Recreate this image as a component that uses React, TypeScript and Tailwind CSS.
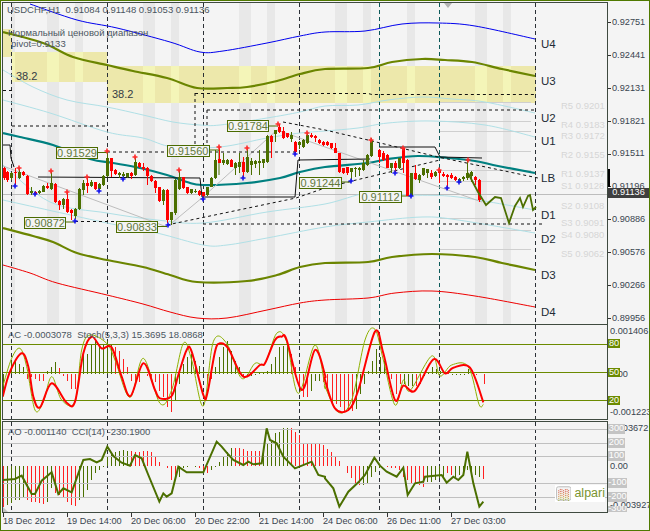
type P = [number, number]

// all chart data below is in crop coordinates (3x), z() brings it back to page pixels
const z = (ox: number, oy: number, list: P[]) => list.map(([x, y]) => `${ox + x / 3},${oy + y / 3}`).join(' ')

// catmull-rom through the points, MT4 lines are smooth between the samples
const smooth = (pts: string) => {
  const p = pts.split(' ').map((s) => s.split(',').map(Number))
  let d = `M${p[0][0]} ${p[0][1]}`
  for (let i = 0; i < p.length - 1; i++) {
    const a = p[i - 1] || p[i]
    const b = p[i]
    const c = p[i + 1]
    const e = p[i + 2] || c
    d += `C${b[0] + (c[0] - a[0]) / 6} ${b[1] + (c[1] - a[1]) / 6} ${c[0] - (e[0] - b[0]) / 6} ${c[1] - (e[1] - b[1]) / 6} ${c[0]} ${c[1]}`
  }
  return d
}

const bands: P[] = [[11, 15], [47, 59], [75, 83], [143, 155], [171, 179], [239, 251], [267, 275], [335, 347], [363, 371], [407, 415], [475, 487], [503, 511]]
const yellow = [{ x: 3, y: 29, w: 9, h: 28 }, { x: 12, y: 52, w: 95, h: 30 }, { x: 107, y: 66, w: 429, h: 37 }]
const gridX = [11.5, 107.5, 203.5, 299.5, 379.5, 439.5, 535.5]

const lines: { pts: string; color: string; w: number }[] = [
  { color: '#0000ee', w: 1, pts: '30,4 77,20 117,28 170,42 200,52 223,51 267,43 300,36 325,32 365,31 402,24 438,23 475,26 535,39' },
  { color: '#6b8500', w: 2.2, pts: '3,32 43,43 73,57 107,65 133,71 167,78 197,88 227,88 247,87 277,81 300,74 325,69 368,68 392,62 422,59 445,60 472,62 502,69 535,76' },
  { color: '#b0e0e6', w: 1, pts: '3,70 33,87 67,100 107,107 143,115 173,122 200,125 220,125 267,118 300,112 325,106 358,105 388,100 422,97 452,99 485,102 535,113' },
  { color: '#b0e0e6', w: 1, pts: '3,100 50,113 107,132 143,138 173,147 220,147 267,138 300,133 325,131 358,128 388,123 432,121 485,125 535,137' },
  { color: '#b0e0e6', w: 1, pts: '3,165 50,202 107,213 157,220 203,223 267,212 325,204 368,193 412,195 458,197 535,210' },
  { color: '#b0e0e6', w: 1, pts: '3,200 107,223 157,233 203,245 227,245 267,238 325,227 368,222 422,217 458,220 535,233' },
  { color: '#008080', w: 2.2, pts: '3,133 20,137 53,145 90,159 113,163 140,168 167,175 187,182 203,185 247,183 280,178 300,172 325,167 368,163 388,159 418,156 448,158 475,161 498,166 535,173' },
  { color: '#6b8500', w: 2.2, pts: '3,228 33,236 53,242 77,253 107,260 143,267 170,275 197,282 247,281 277,275 300,267 325,263 368,262 392,257 432,254 475,257 502,263 535,270' },
  { color: '#ee0000', w: 1, pts: '3,265 30,273 57,283 107,295 143,304 170,312 197,318 227,318 267,310 300,303 325,300 368,298 395,293 432,291 475,296 535,307' },
]

const levels = [102, 121, 131, 151, 170, 181, 218, 230, 249]

const blackSolid = ['3,145 10,145 11,158 14,167', '38,177 200,178 202,197 295,197 298,160 370,159', '379,147 435,147 440,157 482,158']
const blackDash = [
  '3,90.5 12,90.5', '12,126 107,126', '107,152 295,152', '195,93.5 368,93.5 372,94.5 535,94.5', '207,110 535,110',
  '195,93 195,145', '207,110 207,145', '75,221.5 130,221.5', '167,225 296,198 325,188 352,181 440,160', '283,122 325,130 368,140 438,157 538,178',
  '203,224 543,224',
]
const greyZig = ['3,166 167,227 203,197 277,130 325,147 482,202']

// candles: zx, body top, body bottom, high, low, red?
const c3: [number, number, number, number, number, number][] = [
  [12, 115, 145, 112, 150, 1], [22, 125, 150, 122, 155, 1], [34, 128, 145, 125, 150, 0], [46, 125, 130, 115, 165, 1], [58, 125, 145, 115, 148, 0],
  [70, 125, 135, 122, 138, 1], [82, 138, 192, 136, 194, 1], [94, 183, 190, 172, 194, 0], [106, 187, 193, 183, 195, 1], [118, 182, 190, 180, 192, 0],
  [130, 168, 185, 165, 187, 0], [142, 168, 173, 160, 178, 1], [154, 160, 178, 125, 180, 0], [166, 162, 215, 160, 218, 1], [178, 212, 225, 210, 240, 1],
  [190, 206, 225, 204, 238, 0], [202, 207, 247, 185, 250, 1], [214, 240, 250, 238, 270, 1], [226, 237, 258, 235, 268, 0], [238, 178, 237, 175, 240, 0],
  [250, 158, 180, 150, 195, 0], [262, 158, 168, 140, 188, 1], [274, 155, 168, 150, 170, 0], [286, 157, 178, 155, 180, 1], [298, 162, 178, 160, 185, 0],
  [310, 137, 165, 135, 168, 0], [322, 85, 138, 62, 140, 0], [334, 85, 122, 83, 142, 1], [346, 120, 133, 118, 136, 1], [358, 130, 135, 125, 145, 0],
  [370, 132, 138, 125, 150, 0], [382, 130, 140, 128, 145, 0], [394, 130, 137, 125, 148, 1], [406, 95, 135, 80, 138, 0], [418, 98, 112, 96, 115, 1],
  [430, 110, 118, 100, 122, 1], [442, 113, 138, 110, 165, 1], [454, 138, 153, 136, 155, 1], [466, 153, 175, 150, 190, 1], [478, 172, 212, 170, 215, 1],
  [490, 180, 213, 178, 225, 0], [502, 180, 270, 178, 280, 1], [514, 247, 270, 245, 285, 0], [526, 150, 250, 148, 255, 0], [538, 142, 177, 120, 180, 0],
  [550, 142, 175, 140, 178, 1], [562, 172, 190, 170, 192, 1], [574, 178, 190, 176, 192, 0], [586, 182, 185, 178, 190, 0], [598, 183, 195, 181, 197, 1],
  [610, 187, 197, 185, 205, 1], [622, 172, 195, 170, 197, 0], [634, 143, 170, 141, 172, 0], [646, 90, 145, 60, 148, 0], [658, 88, 98, 50, 100, 1],
  [670, 90, 100, 70, 105, 0], [682, 90, 102, 88, 105, 0], [694, 90, 110, 88, 112, 1], [706, 98, 115, 96, 135, 0], [718, 97, 110, 70, 130, 0],
  [730, 97, 125, 80, 145, 1], [742, 82, 125, 50, 128, 0], [754, 92, 105, 85, 135, 0], [766, 92, 102, 90, 115, 0], [778, 92, 100, 60, 135, 0],
  [790, 88, 98, 86, 115, 0], [802, 17, 95, 15, 100, 0], [814, 17, 35, 15, 85, 1], [826, 1, 12, 0, 35, 0],
]
const c0: [number, number, number, number, number, number][] = [
  [838, 380, 395, 372, 398, 1], [850, 392, 415, 382, 418, 1], [862, 400, 412, 398, 415, 1], [874, 405, 418, 395, 425, 0], [886, 425, 455, 423, 465, 1],
  [898, 425, 435, 423, 448, 0], [910, 420, 440, 418, 445, 0], [922, 405, 430, 400, 433, 0], [934, 405, 410, 400, 413, 1], [946, 408, 415, 406, 425, 1],
  [958, 420, 430, 418, 433, 1], [970, 425, 435, 423, 437, 1],
]
const c4: [number, number, number, number, number, number][] = [
  [6, 35, 45, 32, 47, 1], [18, 40, 55, 38, 57, 1], [30, 55, 68, 38, 70, 1], [42, 70, 125, 68, 130, 1], [54, 115, 128, 113, 132, 1],
  [66, 112, 128, 110, 135, 1], [78, 115, 127, 113, 155, 0], [90, 113, 117, 110, 140, 0], [102, 113, 120, 111, 138, 0], [114, 100, 120, 90, 122, 0],
  [126, 75, 105, 73, 108, 0], [138, 30, 78, 25, 80, 0], [162, 60, 80, 58, 100, 1], [174, 70, 90, 62, 92, 1], [186, 75, 113, 73, 115, 1],
  [198, 100, 115, 98, 130, 0], [210, 100, 115, 92, 130, 1], [222, 85, 115, 83, 118, 0], [234, 55, 100, 53, 130, 1], [246, 90, 197, 88, 199, 1],
  [258, 130, 197, 128, 199, 0], [270, 130, 148, 105, 150, 1], [282, 135, 150, 133, 160, 0], [294, 115, 135, 113, 138, 0], [306, 118, 130, 116, 145, 0],
  [318, 130, 140, 120, 148, 1], [330, 125, 138, 123, 142, 0], [342, 120, 130, 115, 160, 1], [354, 132, 138, 126, 142, 1], [366, 135, 140, 133, 180, 1],
  [378, 135, 145, 130, 148, 1], [390, 140, 150, 138, 152, 1], [402, 147, 158, 145, 160, 0], [414, 140, 148, 138, 152, 0], [426, 130, 145, 90, 150, 0],
  [438, 125, 138, 123, 155, 0], [450, 140, 150, 138, 165, 1], [462, 150, 210, 148, 215, 1],
]

const redMarks: P[] = [[19, 168], [51, 171], [67, 192], [87, 177], [107, 151], [135, 157], [179, 170], [219, 147], [247, 148], [278, 124], [307, 133], [371, 140], [403, 148], [439, 170], [468, 160]]
const blueMarks: P[] = [[15, 186], [35, 194], [75, 221], [99, 191], [123, 179], [168, 225], [203, 199], [243, 178], [295, 154], [351, 181], [395, 173], [411, 196], [447, 188], [459, 182]]

const prices = [
  { t: '0.91529', x: 56, y: 147, w: 42 }, { t: '0.91560', x: 167, y: 145, w: 43 }, { t: '0.91784', x: 227, y: 120, w: 42 },
  { t: '0.90872', x: 24, y: 217, w: 42 }, { t: '0.90833', x: 116, y: 221, w: 42 }, { t: '0.91244', x: 299, y: 177, w: 43 }, { t: '0.91112', x: 359, y: 191, w: 43 },
]
const priceLinks = ['98,152.5 107,152.5', '210,150 219,150 219,175', '269,126 278,126', '66,222 75,222', '158,226.5 167,226.5', '342,182 351,182', '402,196 411,196']

const notes = [
  { t: '38.2', x: 16, y: 76, c: 'text-[#333b44]', s: 'text-[11px]' },
  { t: '38.2', x: 112, y: 94, c: 'text-[#333b44]', s: 'text-[11px]' },
  ...['U4:45', 'U3:82', 'U2:119', 'U1:142', 'LB:179', 'D1:216', 'D2:240', 'D3:276', 'D4:313'].map((v) => ({
    t: v.split(':')[0], x: 541, y: Number(v.split(':')[1]), c: 'text-[#222b36]', s: 'text-[11.5px]',
  })),
  ...['R5 0.9201:106', 'R4 0.9183:125', 'R3 0.9172:136', 'R2 0.9155:155', 'R1 0.9137:174', 'S1 0.9128:186', 'S2 0.9108:206', 'S3 0.9091:223', 'S4 0.9080:235', 'S5 0.9062:254'].map((v) => ({
    t: v.split(':')[0], x: 561, y: Number(v.split(':')[1]), c: 'text-[#d6d6d6]', s: 'text-[9.5px]',
  })),
]

const axisMain = ['0.92751', '0.92441', '0.92131', '0.91821', '0.91511', '0.91196', '0.90886', '0.90576', '0.90266', '0.89956']

// AC histogram: zx, height in crop units (+ up), red?
const acLeft: [number, number, number][] = [
  [10, -65, 0], [34, 40, 0], [46, 40, 0], [58, 30, 0], [70, 20, 0], [82, -15, 1], [94, -8, 1], [106, -15, 1], [118, -20, 1], [130, -20, 1], [142, 8, 0], [154, 20, 0], [166, 35, 0],
  [178, 18, 1], [190, -5, 1], [202, -20, 1], [214, -45, 1], [226, -45, 1], [250, 60, 0], [262, 60, 0], [274, 90, 0], [286, 100, 0], [298, 90, 0], [310, 90, 0], [322, 100, 0], [334, 90, 0],
  [346, 80, 1], [358, 70, 1], [370, 45, 1], [382, 20, 1], [394, -20, 1], [406, -30, 1], [418, -25, 1], [442, -5, 1], [454, -15, 1], [466, -25, 1], [478, -50, 1], [490, -70, 1], [502, -100, 1],
  [514, -115, 1], [526, -80, 0], [538, -30, 0], [550, 30, 0], [562, 50, 0], [574, 60, 0], [586, 40, 0], [598, 25, 0], [610, 10, 0], [622, -30, 1], [634, -15, 1], [646, 20, 0], [658, 50, 0],
  [670, 80, 0], [682, 100, 0], [694, 70, 0], [706, 40, 0], [718, 20, 0], [730, -10, 1], [742, -5, 0], [754, -5, 0], [766, -3, 0], [778, 3, 0], [790, 3, 0], [802, 10, 0], [814, 30, 0],
  [826, 50, 0], [838, 80, 0], [850, 85, 0], [862, 100, 0], [874, 60, 1], [886, 20, 1], [898, -35, 1], [910, -70, 1], [922, -70, 1], [934, -50, 0], [946, -20, 0], [958, -20, 0], [970, -25, 1],
]
const acRight: [number, number, number][] = [
  [5, -50, 1], [20, -90, 1], [32, -90, 1], [44, -100, 1], [56, -110, 1], [68, -110, 1], [80, -110, 1], [92, -105, 0], [104, -60, 0], [116, -30, 0], [128, 10, 0], [140, 40, 0], [152, 75, 0],
  [164, 50, 0], [176, 40, 0], [188, -5, 1], [198, -15, 1], [212, -60, 1], [224, -30, 1], [236, -30, 0], [248, -35, 0], [260, -35, 0], [272, -35, 1], [284, -30, 1], [296, -5, 0], [308, 5, 0],
  [320, 20, 0], [332, 15, 0], [344, 10, 0], [356, 5, 1], [368, 5, 1], [380, -3, 0], [392, -3, 0], [404, -3, 0], [416, -3, 0], [428, 15, 0], [440, 5, 1], [452, -2, 1], [476, -30, 1],
]
const stochRed = z(0, 320, [[8, 230], [30, 155], [65, 100], [85, 140], [100, 230], [120, 262], [155, 190], [200, 248], [225, 245], [250, 100], [275, 50], [305, 85], [335, 82], [365, 170], [392, 228], [430, 130], [465, 210], [480, 235], [515, 228], [535, 165], [560, 90], [575, 95], [610, 225], [622, 220], [645, 95], [660, 70], [685, 85], [730, 170], [780, 135], [795, 130], [825, 60], [845, 50], [860, 60], [905, 210], [945, 90], [975, 165]])
  + ' ' + z(325, 320, [[0, 180], [30, 265], [70, 270], [100, 210], [150, 35], [175, 100], [210, 240], [235, 197], [270, 212], [325, 118], [360, 160], [385, 143], [435, 143], [475, 247]])
const stochLime = z(0, 320, [[8, 200], [35, 115], [60, 85], [80, 140], [105, 270], [130, 245], [155, 170], [185, 240], [225, 245], [245, 90], [270, 45], [320, 70], [345, 120], [390, 232], [430, 115], [480, 250], [515, 210], [550, 70], [575, 120], [610, 258], [640, 65], [680, 70], [725, 175], [765, 130], [795, 130], [830, 40], [860, 65], [895, 220], [945, 75], [975, 200]])
  + ' ' + z(325, 320, [[0, 200], [40, 277], [80, 240], [120, 60], [150, 28], [175, 120], [210, 255], [235, 180], [255, 212], [320, 108], [345, 168], [380, 135], [430, 140], [462, 253], [475, 253]])

// AO histogram: zx, end in crop units, red?
const aoLeft: [number, number, number][] = [
  [10, 560, 1], [22, 555, 0], [34, 550, 0], [46, 540, 0], [58, 540, 0], [70, 535, 0], [82, 540, 1], [94, 545, 1], [106, 545, 1], [118, 550, 1], [130, 552, 1], [142, 545, 0], [154, 505, 0],
  [166, 520, 1], [178, 525, 1], [190, 530, 1], [202, 545, 1], [214, 555, 1], [226, 558, 1], [238, 540, 0], [250, 530, 0], [262, 510, 0], [274, 480, 0], [286, 460, 0], [298, 450, 0], [310, 440, 0],
  [322, 412, 0], [334, 400, 0], [346, 395, 0], [358, 392, 0], [370, 390, 0], [382, 392, 0], [394, 392, 1], [406, 395, 1], [418, 395, 1], [430, 392, 1], [442, 393, 1], [454, 397, 1], [466, 410, 1],
  [478, 425, 1], [502, 445, 1], [514, 480, 1], [526, 480, 1], [538, 470, 0], [550, 445, 0], [562, 440, 0], [586, 440, 0], [598, 445, 1], [610, 455, 1], [622, 458, 1], [634, 450, 0], [646, 440, 0],
  [658, 425, 0], [670, 410, 0], [682, 395, 0], [694, 385, 0], [706, 385, 1], [718, 385, 1], [730, 388, 1], [742, 392, 1], [754, 392, 1], [766, 392, 1], [778, 392, 1], [790, 395, 0], [802, 370, 0],
  [814, 365, 0], [826, 340, 0], [838, 335, 0], [850, 325, 0], [862, 325, 0], [874, 325, 1], [886, 335, 1], [898, 345, 1], [910, 372, 1], [922, 372, 1], [934, 372, 1], [946, 372, 1], [958, 372, 1], [970, 375, 1],
]
const aoRight: [number, number, number][] = [
  [6, 388, 1], [18, 397, 1], [30, 410, 1], [42, 422, 1], [66, 458, 1], [78, 475, 1], [90, 490, 1], [102, 495, 1], [114, 495, 0], [126, 490, 0], [138, 470, 0], [150, 455, 0], [162, 445, 0],
  [186, 440, 1], [198, 445, 1], [210, 445, 1], [222, 450, 1], [234, 470, 1], [246, 480, 1], [258, 490, 1], [270, 490, 1], [282, 495, 1], [294, 500, 1], [306, 485, 0], [318, 485, 0], [330, 480, 0],
  [342, 475, 0], [354, 470, 0], [366, 460, 1], [378, 465, 1], [390, 470, 0], [402, 465, 0], [414, 455, 0], [426, 450, 0], [438, 460, 0], [450, 465, 0], [462, 470, 0], [474, 478, 1],
]
const cci = z(0, 320, [[8, 480], [45, 477], [65, 467], [95, 522], [105, 522], [125, 482], [155, 457], [175, 522], [190, 505], [215, 517], [235, 460], [250, 420], [270, 417], [290, 427], [305, 420], [322, 380], [340, 408], [365, 428], [390, 437], [405, 405], [425, 415], [445, 465], [478, 545], [490, 520], [500, 530], [515, 520], [535, 440], [560, 457], [610, 457], [650, 365], [665, 380], [680, 398], [700, 420], [730, 435], [745, 425], [760, 433], [785, 430], [800, 325], [810, 360], [830, 370], [850, 410], [885, 445], [935, 425], [955, 465], [975, 470]])
  + ' ' + z(325, 320, [[0, 475], [25, 505], [43, 560], [70, 515], [100, 487], [120, 465], [148, 413], [165, 437], [185, 455], [215, 470], [235, 443], [248, 525], [270, 490], [295, 485], [300, 470], [350, 465], [365, 488], [385, 470], [400, 480], [415, 465], [427, 395], [445, 490], [463, 560], [475, 545]])
const liveLine = '468,173 478,192 486,205 495,197 501,198 509,223 515,206 520,198 523,207 528,196 530,195 533,210 536,207'

const timeLabels = ['18 Dec 2012', '19 Dec 14:00', '20 Dec 06:00', '20 Dec 22:00', '21 Dec 14:00', '24 Dec 06:00', '26 Dec 11:00', '27 Dec 03:00']

const logoDots = [
  ['#d9644a', 4], ['#d9644a', 6], ['#d98a4a', 8], ['#d98a4a', 10], ['#c9b04a', 12], ['#9fb04a', 14],
] as const

function Candles({ list, ox, oy }: { list: typeof c3; ox: number; oy: number }) {
  return (
    <>
      {list.map(([x, top, bottom, hi, lo, red]) => {
        const cx = Math.round(ox + x / 3) + 0.5
        const col = red ? '#ff0000' : '#4b6f00'
        return (
          <g key={x}>
            <line x1={cx} x2={cx} y1={oy + hi / 3} y2={oy + lo / 3} stroke={col} />
            <rect x={cx - 1.5} y={oy + top / 3} width={3} height={(bottom - top) / 3} fill={col} />
          </g>
        )
      })}
    </>
  )
}

function GridDashes({ y1, y2, sub }: { y1: number; y2: number; sub?: boolean }) {
  return (
    <>
      {gridX.map((x) => (
        <line key={x} x1={x} x2={x} y1={y1} y2={y2} strokeDasharray="4 3" stroke={!sub && (x === 379.5 || x === 439.5) ? '#0c5a5a' : '#2b3036'} />
      ))}
    </>
  )
}

function Mark({ p, color }: { p: P; color: string }) {
  return <path d={`M${p[0] - 2.5} ${p[1]}h5M${p[0]} ${p[1] - 2.5}v5`} stroke={color} strokeWidth={1.6} />
}

export default function App() {
  const greenBadge = 'absolute left-0 flex h-[9px] w-[12px] items-center justify-center bg-[#6b8a00] text-[9.2px] leading-none text-white'
  const greyBadge = 'absolute left-0 flex h-[10px] items-center justify-center overflow-hidden bg-[#c4c4c4] text-[9.2px] leading-none text-white'

  return (
    <div className="flex h-[531px] w-[650px] flex-col overflow-hidden border border-[#4f7900] bg-[#f4f4f4] font-['Liberation_Sans',sans-serif]">
      {/* main chart */}
      <div className="mt-px flex h-[322px]">
        <div className="relative ml-px w-[606px] border-x border-t border-x-[#3f4a40] border-t-[#3f4a40]">
          <svg className="absolute inset-0 h-full w-full" viewBox="3 3 604 321">
            <g shapeRendering="crispEdges">
              {bands.map(([a, b]) => <rect key={a} x={a} y={3} width={b - a} height={321} fill="#e8e8e8" />)}
              {yellow.map((r) => <rect key={r.x} x={r.x} y={r.y} width={r.w} height={r.h} fill="#ede8ab" />)}
              {bands.map(([a, b]) => yellow.map((r) => {
                const l = Math.max(a, r.x)
                const e = Math.min(b, r.x + r.w)
                return e > l ? <rect key={`${a}-${r.x}`} x={l} y={r.y} width={e - l} height={r.h} fill="#f4f5b8" /> : null
              }))}
              <line x1={3} x2={607} y1={194} y2={194} stroke="#bdbdbd" />
              {levels.map((y) => <line key={y} x1={440} x2={531} y1={y} y2={y} stroke="#cfcfcf" />)}
            </g>
            <GridDashes y1={3} y2={324} />
            {lines.map((l, i) => <path key={i} d={smooth(l.pts)} fill="none" stroke={l.color} strokeWidth={l.w} />)}
            {greyZig.map((p) => <polyline key={p} points={p} fill="none" stroke="#bdbdbd" />)}
            {blackDash.map((p) => <polyline key={p} points={p} fill="none" stroke="#111" strokeDasharray="3 3" />)}
            {blackSolid.map((p) => <polyline key={p} points={p} fill="none" stroke="#111" />)}
            {priceLinks.map((p) => <polyline key={p} points={p} fill="none" stroke="#4b6b00" />)}
            <g shapeRendering="crispEdges">
              <Candles list={c3} ox={0} oy={130} />
              <Candles list={c0} ox={0} oy={0} />
              <Candles list={c4} ox={325} oy={130} />
            </g>
            <polyline points={liveLine} fill="none" stroke="#4b6f00" strokeWidth={1.8} />
            {redMarks.map((p) => <Mark key={`${p[0]}r`} p={p} color="#ff2a2a" />)}
            {blueMarks.map((p) => <Mark key={`${p[0]}b`} p={p} color="#1414f0" />)}
            <path d="M444 3h8l-4 5z" fill="#b4b4b4" />
          </svg>
          <div className="absolute left-[4px] top-[2px] flex flex-col text-[9.5px] leading-none text-[#4b5661]">
            <span className="whitespace-pre">USDCHF,H1  0.91084 0.91148 0.91053 0.91136</span>
            <span className="ml-px mt-[13px] whitespace-pre">Нормальный ценовой диапазон</span>
            <span className="ml-[4px] mt-[2px] whitespace-pre">pivot=0.9133</span>
          </div>
          {notes.map((n, i) => (
            <span key={i} className={`absolute -translate-y-1/2 whitespace-pre leading-none ${n.c} ${n.s}`} style={{ left: n.x - 3, top: n.y - 3 }}>
              {n.t}
            </span>
          ))}
          {prices.map((p) => (
            <span
              key={p.t}
              className="absolute flex h-[12px] items-center justify-center border border-[#4b6b00] bg-[#f4f4f4] text-[11px] leading-none text-[#62793c]"
              style={{ left: p.x - 3, top: p.y - 3, width: p.w }}
            >
              {p.t}
            </span>
          ))}
        </div>
        <div className="relative flex flex-1 flex-col overflow-hidden pt-[4px]">
          {axisMain.map((t) => (
            <div key={t} className="flex h-[32.9px] shrink-0 items-center gap-[1px] text-[9.2px] leading-none text-[#39444f]">
              <span className="h-px w-[3px] bg-[#333]" />
              <span className="whitespace-nowrap">{t}</span>
            </div>
          ))}
          <span className="absolute left-0 top-[167px] h-[18px] w-[2px] bg-black" />
          <span className="absolute left-0 top-[186px] flex h-[10px] w-[41px] items-center justify-center bg-[#3f3f3f] text-[9.2px] leading-none text-white">0.91136</span>
        </div>
      </div>

      {/* AC + Stochastic */}
      <div className="flex h-[96px]">
        <div className="relative ml-px w-[606px] border border-[#3f4a40]">
          <svg className="absolute inset-0 h-full w-full" viewBox="3 325 604 94">
            <GridDashes y1={325} y2={419} sub />
            {acLeft.map(([x, h, red]) => <line key={x} shapeRendering="crispEdges" x1={Math.round(x / 3) + 0.5} x2={Math.round(x / 3) + 0.5} y1={374} y2={374 - h / 3} stroke={red ? '#ff2020' : '#4b6f00'} />)}
            {acRight.map(([x, h, red]) => <line key={x} shapeRendering="crispEdges" x1={Math.round(325 + x / 3) + 0.5} x2={Math.round(325 + x / 3) + 0.5} y1={374} y2={374 - h / 3} stroke={red ? '#ff2020' : '#4b6f00'} />)}
            {[344.5, 372.5, 400.5].map((y) => <line key={y} x1={3} x2={607} y1={y} y2={y} stroke="#6b8a00" />)}
            <path d={smooth(stochLime)} fill="none" stroke="#8db000" strokeWidth={1} />
            <path d={smooth(stochRed)} fill="none" stroke="#ff0000" strokeWidth={2} />
          </svg>
          <span className="absolute left-[5px] top-[5px] whitespace-pre text-[9.5px] leading-none text-[#4b5661]">AC -0.0003078  Stoch(5,3,3) 15.3695 18.0868</span>
        </div>
        <div className="relative flex flex-1 flex-col overflow-hidden pl-[2px] pt-[2px] text-[9.2px] leading-[10px] text-[#39444f]">
          <span className="whitespace-nowrap">0.001406</span>
          <span className="mt-[33px]">0.00</span>
          <span className="mt-[28px] whitespace-nowrap">-0.001223</span>
          <span className={`${greenBadge} top-[15px]`}>80</span>
          <span className={`${greenBadge} top-[44px]`}>50</span>
          <span className={`${greenBadge} top-[72px]`}>20</span>
        </div>
      </div>

      {/* AO + CCI */}
      <div className="mt-px flex h-[92px]">
        <div className="relative ml-px w-[606px] border border-[#3f4a40]">
          <svg className="absolute inset-0 h-full w-full" viewBox="3 422 604 90">
            <GridDashes y1={422} y2={512} sub />
            {aoLeft.map(([x, e, red]) => <line key={x} shapeRendering="crispEdges" x1={Math.round(x / 3) + 0.5} x2={Math.round(x / 3) + 0.5} y1={466} y2={320 + e / 3} stroke={red ? '#ff2020' : '#4b6f00'} />)}
            {aoRight.map(([x, e, red]) => <line key={x} shapeRendering="crispEdges" x1={Math.round(325 + x / 3) + 0.5} x2={Math.round(325 + x / 3) + 0.5} y1={466} y2={320 + e / 3} stroke={red ? '#ff2020' : '#4b6f00'} />)}
            {[429.5, 443.5, 456.5, 483.5, 497.5].map((y) => <line key={y} x1={3} x2={607} y1={y} y2={y} stroke="#c0c0c0" />)}
            <polyline points={cci} fill="none" stroke="#4b6f00" strokeWidth={2} />
            <path d="M3 512v-5l5 5z" fill="#c4c4c4" />
          </svg>
          <span className="absolute left-[5px] top-[5px] whitespace-pre text-[9.5px] leading-none text-[#4b5661]">AO -0.001140  CCI(14) -230.1900</span>
          <div className="absolute right-[2px] top-[63px] flex h-[17px] w-[50px] items-center gap-[3px] bg-white pl-[1px]">
            <svg width="16" height="15" viewBox="0 0 16 15">
              <rect x="0.5" y="0.5" width="15" height="14" rx="2" fill="#f4f4f4" stroke="#bcbcbc" />
              {logoDots.map(([col, y]) => (
                <path key={y} d={`M2.5 ${y + 1}l2.5-2 3 1.5 3-1.5 2.5 2`} fill="none" stroke={col} strokeWidth={1.1} strokeDasharray="1 1" />
              ))}
            </svg>
            <span className="text-[12.5px] font-medium leading-none text-[#7a9430]">alpari</span>
          </div>
        </div>
        <div className="relative flex flex-1 flex-col overflow-hidden pl-[2px] pt-[2px] text-[9.2px] leading-[10px] text-[#39444f]">
          <span className="whitespace-nowrap">0.003672</span>
          <span className="mt-[28px]">0.00</span>
          <span className="mt-[29px] whitespace-nowrap">-0.003927</span>
          <span className={`${greyBadge} top-[3px] w-[17px]`}>300</span>
          <span className={`${greyBadge} top-[17px] w-[17px]`}>200</span>
          <span className={`${greyBadge} top-[30px] w-[17px]`}>100</span>
          <span className={`${greyBadge} top-[57px] w-[19px]`}>-100</span>
          <span className={`${greyBadge} top-[71px] w-[19px]`}>-200</span>
          <span className={`${greyBadge} top-[85px] !h-[6px] w-[19px]`}>-300</span>
        </div>
      </div>

      {/* time axis */}
      <div className="ml-[2px] flex flex-1">
        {timeLabels.map((t) => (
          <div key={t} className="flex w-[64px] shrink-0 flex-col text-[9.2px] leading-none text-[#39444f]">
            <span className="h-[4px] w-px bg-[#333]" />
            <span className="whitespace-nowrap">{t}</span>
          </div>
        ))}
      </div>
    </div>
  )
}
